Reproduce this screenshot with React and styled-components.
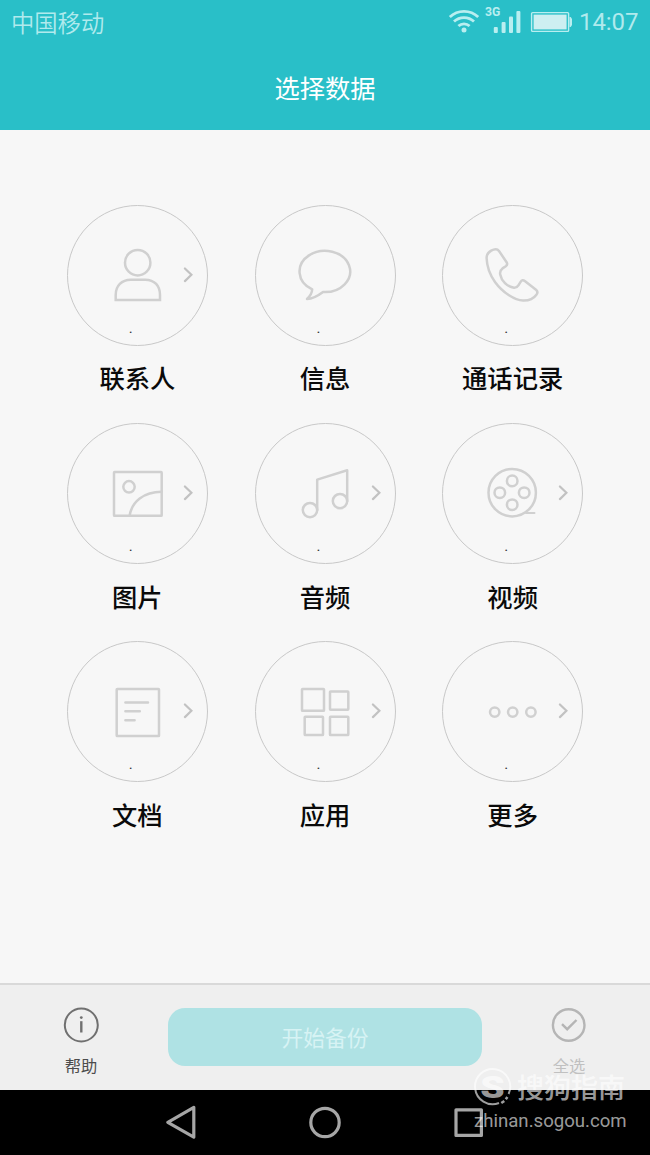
import React from "react";
import styled, { createGlobalStyle } from "styled-components";

const GlobalStyle = createGlobalStyle`
  body {
    margin: 0;
    background: #f7f7f7;
    font-family: Roboto, "Noto Sans CJK SC", sans-serif;
  }
`;

const Screen = styled.div`
  position: relative;
  display: flex;
  flex-direction: column;
  width: 650px;
  height: 1155px;
  overflow: hidden;
  background: #f7f7f7;
`;

const Header = styled.header`
  height: 130px;
  background: #29bfc8;
  color: #fff;
`;

const StatusBar = styled.div`
  display: flex;
  justify-content: space-between;
  align-items: center;
  height: 45px;
  padding: 0 12px 0 11px;
  color: #b0eaed;
`;

const Carrier = styled.span`
  font-family: "Noto Sans CJK SC", sans-serif;
  font-size: 23.3px;
  font-weight: 350;
  line-height: 45px;
`;

const StatusRight = styled.div`
  display: flex;
  align-items: center;
`;

const Clock = styled.span`
  width: 59px;
  font-size: 24px;
  line-height: 47px;
  letter-spacing: -0.1px;
  white-space: nowrap;
`;

const Title = styled.h1`
  margin: 0;
  height: 85px;
  line-height: 85px;
  text-align: center;
  font-family: "Noto Sans CJK SC", sans-serif;
  font-size: 25.3px;
  font-weight: 400;
`;

const Content = styled.main`
  flex: 1;
  display: grid;
  grid-template-columns: repeat(3, 187.67px);
  grid-auto-rows: 218.3px;
  justify-content: center;
  align-content: start;
  padding-top: 74.8px;
`;

const Item = styled.div`
  display: flex;
  flex-direction: column;
  align-items: center;
`;

const Disc = styled.div`
  display: grid;
  width: 141px;
  height: 141px;
  > * {
    grid-area: 1 / 1;
  }
`;

const Glyph = styled.svg`
  width: 141px;
  height: 141px;
  fill: none;
  stroke: #d0d0d0;
  stroke-width: 2.5;
  stroke-linejoin: round;
  stroke-linecap: round;
`;

const Count = styled.span`
  align-self: end;
  padding: 0 0 9px 62px;
  font-size: 15px;
  line-height: 18px;
  color: #333;
`;

const Label = styled.span`
  margin-top: 12.5px;
  font-family: "Noto Sans CJK SC", sans-serif;
  font-size: 25.3px;
  font-weight: 500;
  line-height: 38px;
  color: #0a0a0a;
`;

const Footer = styled.footer`
  display: flex;
  justify-content: space-between;
  box-sizing: border-box;
  height: 107px;
  border-top: 2px solid #d9d9d9;
  background: #efefef;
`;

const Action = styled.div`
  display: flex;
  flex-direction: column;
  align-items: center;
  width: 162px;
  padding-top: 21px;
  color: ${(p) => (p.$muted ? "#b5b5b5" : "#707070")};
`;

const ActionLabel = styled.span`
  margin-top: 9px;
  font-family: "Noto Sans CJK SC", sans-serif;
  font-size: 16.3px;
  line-height: 24px;
  color: ${(p) => (p.$muted ? "#c0c0c0" : "#4c4c4c")};
`;

const StartButton = styled.button`
  width: 314px;
  height: 58px;
  margin: 23px 0 0 0;
  padding: 0;
  border: 0;
  border-radius: 17px;
  background: #afe2e4;
  color: #d7f3f4;
  font-family: "Noto Sans CJK SC", sans-serif;
  font-size: 21.8px;
  line-height: 58px;
`;

const NavBar = styled.nav`
  display: flex;
  justify-content: center;
  gap: 108px;
  height: 65px;
  background: #000;
  svg {
    width: 36px;
    height: 65px;
    fill: none;
    stroke: #a6a6a6;
    stroke-width: 3.2;
    stroke-linejoin: round;
  }
`;

const Watermark = styled.div`
  position: absolute;
  right: 22px;
  bottom: 22px;
  width: 156px;
  color: rgba(255, 255, 255, 0.62);
`;

const Brand = styled.div`
  display: flex;
  align-items: center;
  gap: 5px;
  height: 44px;
  font-family: "Noto Sans CJK SC", sans-serif;
  font-size: 27px;
  font-weight: 500;
  line-height: 40px;
  white-space: nowrap;
  svg {
    flex: none;
  }
`;

const Site = styled.div`
  padding-left: 2px;
  font-family: Roboto, sans-serif;
  font-size: 18.6px;
  line-height: 24px;
  white-space: nowrap;
`;

const glyphs = {
  person: (
    <>
      <circle cx="70.7" cy="57.7" r="12.7" />
      <path d="M48.7 95V90C48.7 81 54.7 74.7 63.7 74.7H78.2C87.7 74.7 93 81 93 90V95Z" strokeLinejoin="miter" />
    </>
  ),
  message: (
    <path d="M57.2 84.3A25.3 20.6 0 1 1 68 87C64.3 89.8 59.5 93.6 52 94C54.8 91.4 57 88.6 57.2 84.3Z" />
  ),
  phone: (
    <path d="M49.2 45.6Q54.6 42.6 57 46L64.6 57.2Q66 59.6 63.8 61.2L60.5 63.4Q57.5 65.6 58.2 69.5C59.5 76 65 81.8 72 82.7Q74.8 82.9 76.4 80.3L78.6 76.8Q80.3 74.2 82.8 76L94 84.8Q96.6 87 94.4 89.8C91 94.5 86.5 95.8 81 95.6C73 95.3 61 88 53 77C47.6 69.3 44.9 62 44.6 53Q44.6 48.2 49.2 45.6Z" />
  ),
  picture: (
    <>
      <rect x="47" y="49.1" width="47.7" height="43.7" rx="0.6" />
      <circle cx="62" cy="63.8" r="5.7" />
      <path d="M62.7 92.5C64.7 79 76.7 68.8 94.7 68.8" />
    </>
  ),
  music: (
    <>
      <circle cx="55" cy="87.1" r="7.2" />
      <circle cx="85" cy="78.1" r="7.2" />
      <path d="M62.2 87V56.6L92.2 47.3V78" />
    </>
  ),
  film: (
    <>
      <circle cx="70.2" cy="69.7" r="23.7" />
      <circle cx="70.2" cy="57.9" r="5.3" />
      <circle cx="57.8" cy="69.7" r="5.3" />
      <circle cx="82.2" cy="69.7" r="5.3" />
      <circle cx="70.2" cy="81.7" r="5.3" />
      <path d="M84 90H92.5" strokeWidth="2" />
    </>
  ),
  document: (
    <>
      <rect x="49.7" y="48" width="42.3" height="47" rx="0.6" />
      <path d="M58.4 61.4H81M58.4 70.2H72.8M58.4 79.2H67.6" />
    </>
  ),
  apps: (
    <>
      <rect x="47" y="48" width="22" height="21.8" rx="0.6" />
      <rect x="75" y="50.4" width="18.3" height="18.3" rx="0.6" />
      <rect x="49.7" y="75.7" width="18.3" height="18.3" rx="0.6" />
      <rect x="75" y="75.7" width="18.3" height="18.3" rx="0.6" />
    </>
  ),
  more: (
    <>
      <circle cx="52.7" cy="71.1" r="4.7" />
      <circle cx="70.7" cy="71.1" r="4.7" />
      <circle cx="88.9" cy="71.1" r="4.7" />
    </>
  ),
};

const items = [
  { label: "联系人", glyph: "person", arrow: true },
  { label: "信息", glyph: "message", arrow: false },
  { label: "通话记录", glyph: "phone", arrow: false },
  { label: "图片", glyph: "picture", arrow: true },
  { label: "音频", glyph: "music", arrow: true },
  { label: "视频", glyph: "film", arrow: true },
  { label: "文档", glyph: "document", arrow: true },
  { label: "应用", glyph: "apps", arrow: true },
  { label: "更多", glyph: "more", arrow: true },
];

function DataItem({ label, glyph, arrow }) {
  return (
    <Item>
      <Disc>
        <Glyph viewBox="0 0 141 141">
          <circle cx="70.5" cy="70.5" r="70" stroke="#c8c8c8" strokeWidth="1" />
          {glyphs[glyph]}
          {arrow && (
            <path d="M117.9 63.5L124.4 69.8L117.9 76.1" stroke="#c2c2c2" strokeWidth="2.2" strokeLinejoin="miter" />
          )}
        </Glyph>
        <Count>.</Count>
      </Disc>
      <Label>{label}</Label>
    </Item>
  );
}

function StatusIcons() {
  return (
    <svg width="131" height="45" viewBox="448 0 131 45" fill="none" stroke="#b9eef0">
      <g strokeWidth="2.8">
        <path d="M449.8 17A20.5 20.5 0 0 1 478.2 17" />
        <path d="M454 21.6A14.5 14.5 0 0 1 474 21.6" />
        <path d="M458.4 26A8.3 8.3 0 0 1 469.6 26" />
      </g>
      <g fill="#b9eef0" stroke="none">
        <circle cx="464" cy="30" r="2.5" />
        <text x="485" y="16.2" fontFamily="Roboto, sans-serif" fontSize="12.2" fontWeight="700">3G</text>
        <rect x="493.8" y="27" width="4" height="6" rx="1" />
        <rect x="501.6" y="22" width="4" height="11" rx="1" />
        <rect x="509" y="16.5" width="4" height="16.5" rx="1" />
        <rect x="516.4" y="11" width="4" height="22" rx="1" />
        <rect x="533.6" y="14.6" width="33" height="14.8" fill="#cdeff1" />
        <path d="M569.5 17h1.2l1.3 2v6l-1.3 2h-1.2z" />
      </g>
      <rect x="531.6" y="12.6" width="37" height="18.8" rx="1" strokeWidth="1.4" />
    </svg>
  );
}

export default function App() {
  return (
    <>
      <GlobalStyle />
      <Screen>
        <Header>
          <StatusBar>
            <Carrier>中国移动</Carrier>
            <StatusRight>
              <StatusIcons />
              <Clock>14:07</Clock>
            </StatusRight>
          </StatusBar>
          <Title>选择数据</Title>
        </Header>
        <Content>
          {items.map((item) => (
            <DataItem key={item.label} {...item} />
          ))}
        </Content>
        <Footer>
          <Action>
            <svg width="38" height="38" fill="none" stroke="currentColor" strokeWidth="2">
              <circle cx="19.3" cy="19" r="16.5" />
              <path d="M19.3 15.2V26.5" strokeWidth="2.4" />
              <circle cx="19.3" cy="11.6" r="1.4" fill="currentColor" stroke="none" />
            </svg>
            <ActionLabel>帮助</ActionLabel>
          </Action>
          <StartButton>开始备份</StartButton>
          <Action $muted>
            <svg width="38" height="38" fill="none" stroke="currentColor" strokeWidth="2.4">
              <circle cx="18.7" cy="19" r="15.8" />
              <path d="M12 18.2L17.2 23.2L26.5 14" />
            </svg>
            <ActionLabel $muted>全选</ActionLabel>
          </Action>
        </Footer>
        <NavBar>
          <svg viewBox="0 0 36 65">
            <path d="M4.8 32.3L30.8 17.4V47.2Z" />
          </svg>
          <svg viewBox="0 0 36 65">
            <circle cx="18" cy="32.5" r="14.2" />
          </svg>
          <svg viewBox="0 0 36 65">
            <rect x="5" y="19.8" width="25.4" height="25.6" />
          </svg>
        </NavBar>
        <Watermark>
          <Brand>
            <svg width="40" height="44" viewBox="0 0 40 44" fill="none" stroke="currentColor">
              <path d="M27 38A17.6 17.6 0 1 1 36.6 29" strokeWidth="2" />
              <path d="M29.3 38L32.3 36M33.8 34.2L35.4 32" strokeWidth="2.6" />
              <text x="16" y="33.4" textAnchor="middle" transform="scale(1.28 1)" fill="currentColor" stroke="none" fontFamily="Roboto, sans-serif" fontSize="30.5" fontWeight="900">S</text>
            </svg>
            搜狗指南
          </Brand>
          <Site>zhinan.sogou.com</Site>
        </Watermark>
      </Screen>
    </>
  );
}
